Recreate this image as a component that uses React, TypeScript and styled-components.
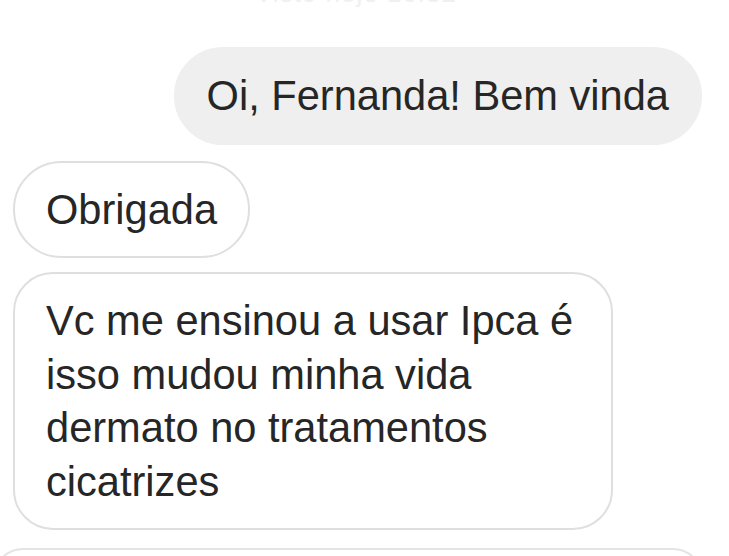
import React from "react";
import styled, { createGlobalStyle } from "styled-components";

const Global = createGlobalStyle`
  html, body { margin: 0; padding: 0; background: #ffffff; }
  body { width: 729px; height: 556px; overflow: hidden; }
  * { box-sizing: border-box; }
`;

const Thread = styled.div`
  width: 729px;
  height: 556px;
  overflow: hidden;
  display: flex;
  flex-direction: column;
  font-family: "Liberation Sans", Arial, Helvetica, sans-serif;
  color: #262626;
`;

const Stamp = styled.div`
  height: 47px;
  flex-shrink: 0;
  padding-left: 255px;
`;

const StampText = styled.div`
  margin-top: -20px;
  font-size: 26px;
  line-height: 26px;
  color: #f0f0f0;
  letter-spacing: 1px;
  white-space: nowrap;
`;

const Row = styled.div<{ $mine?: boolean; $gap?: number }>`
  display: flex;
  flex-shrink: 0;
  justify-content: ${(p) => (p.$mine ? "flex-end" : "flex-start")};
  padding: ${(p) => (p.$mine ? "0 27px 0 0" : "0 0 0 13px")};
  margin-bottom: ${(p) => p.$gap ?? 0}px;
`;

const Bubble = styled.div<{ $mine?: boolean; $radius?: number; $max?: number }>`
  font-size: 41.6px;
  line-height: 53.5px;
  background: ${(p) => (p.$mine ? "#efefef" : "#ffffff")};
  border: 2px solid ${(p) => (p.$mine ? "#efefef" : "#dfdfdf")};
  border-radius: ${(p) => p.$radius ?? 49}px;
  padding: 20px 31px 20px 31px;
  max-width: ${(p) => p.$max ?? 610}px;
  width: fit-content;
`;

const Tail = styled.div`
  margin-left: -20px;
  width: 710px;
  height: 60px;
  border: 2px solid #e4e4e4;
  border-radius: 40px;
  flex-shrink: 0;
`;

export default function App() {
  return (
    <>
      <Global />
      <Thread>
        <Stamp>
          <StampText>Visto hoje 10:32</StampText>
        </Stamp>
        <Row $mine $gap={16}>
          <Bubble $mine>Oi, Fernanda! Bem vinda</Bubble>
        </Row>
        <Row $gap={14}>
          <Bubble>Obrigada</Bubble>
        </Row>
        <Row $gap={18}>
          <Bubble $radius={40} $max={600}>
            Vc me ensinou a usar Ipca é isso mudou minha vida dermato no tratamentos cicatrizes
          </Bubble>
        </Row>
        <Row>
          <Tail />
        </Row>
      </Thread>
    </>
  );
}
